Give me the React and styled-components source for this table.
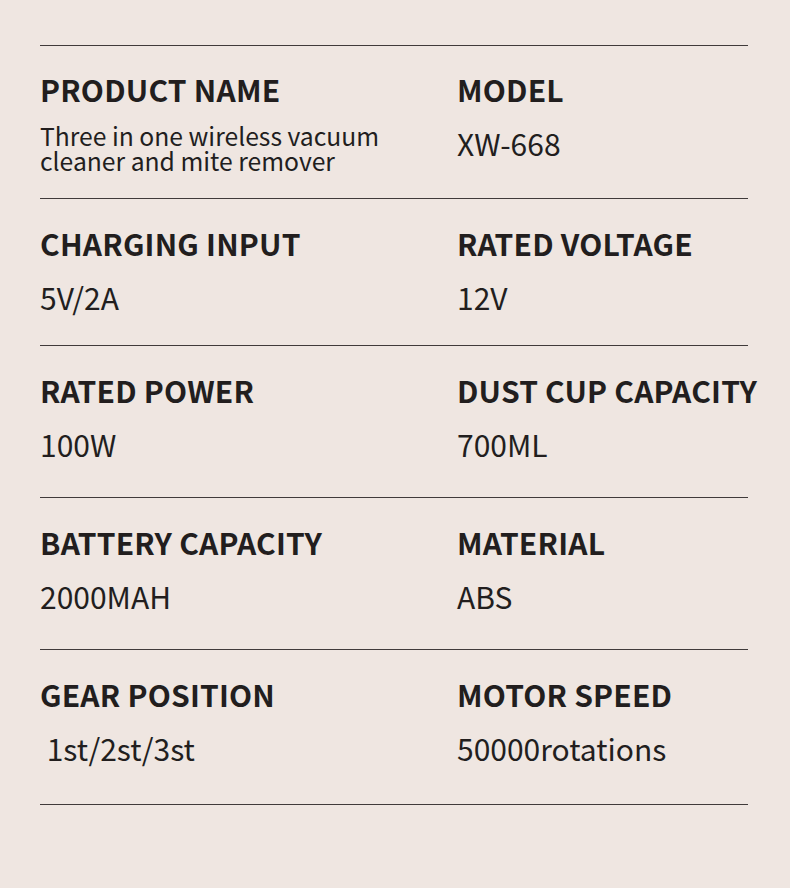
import React from 'react';
import styled, { createGlobalStyle } from 'styled-components';

const GlobalStyle = createGlobalStyle`
  html, body {
    margin: 0;
    padding: 0;
    background: #efe6e1;
  }
  body {
    font-family: "Noto Sans CJK SC", "Noto Sans", sans-serif;
    color: #221e1e;
  }
`;

const Sheet = styled.div`
  width: 790px;
  height: 888px;
  box-sizing: border-box;
  padding: 45px 42px 0 40px;
  background: #efe6e1;
  overflow: hidden;
`;

const Row = styled.div`
  display: grid;
  grid-template-columns: 417px 1fr;
  box-sizing: border-box;
  height: ${p => p.$height}px;
  padding-top: ${p => p.$pad}px;
  border-top: 1px solid #403a3a;
  &:last-child {
    border-bottom: 1px solid #403a3a;
    height: ${p => p.$height + 1}px;
  }
`;

const Cell = styled.div`
  display: flex;
  flex-direction: column;
  gap: 24px;
  white-space: nowrap;
`;

const Label = styled.h4`
  margin: 0;
  font-size: 30px;
  line-height: 30px;
  font-weight: 700;
  letter-spacing: 0.2px;
`;

const Value = styled.div`
  font-size: ${p => (p.$small ? 24.7 : 30)}px;
  line-height: ${p => (p.$small ? 25 : 30)}px;
  font-weight: 400;
  white-space: pre;
  margin-top: ${p => (p.$small ? -5 : 0)}px;
`;

const specs = [
  {
    height: 153,
    pad: 28,
    items: [
      { label: 'PRODUCT NAME', value: 'Three in one wireless vacuum\ncleaner and mite remover', small: true },
      { label: 'MODEL', value: 'XW-668' },
    ],
  },
  {
    height: 147,
    pad: 29,
    items: [
      { label: 'CHARGING INPUT', value: '5V/2A' },
      { label: 'RATED VOLTAGE', value: '12V' },
    ],
  },
  {
    height: 152,
    pad: 29,
    items: [
      { label: 'RATED POWER', value: '100W' },
      { label: 'DUST CUP CAPACITY', value: '700ML' },
    ],
  },
  {
    height: 152,
    pad: 29,
    items: [
      { label: 'BATTERY CAPACITY', value: '2000MAH' },
      { label: 'MATERIAL', value: 'ABS' },
    ],
  },
  {
    height: 155,
    pad: 29,
    items: [
      { label: 'GEAR POSITION', value: '\u00a01st/2st/3st' },
      { label: 'MOTOR SPEED', value: '50000rotations' },
    ],
  },
];

const App = () => (
  <>
    <GlobalStyle />
    <Sheet>
      {specs.map((row, i) => (
        <Row key={i} $height={row.height} $pad={row.pad}>
          {row.items.map(item => (
            <Cell key={item.label}>
              <Label>{item.label}</Label>
              <Value $small={item.small}>{item.value}</Value>
            </Cell>
          ))}
        </Row>
      ))}
    </Sheet>
  </>
);

export default App;
